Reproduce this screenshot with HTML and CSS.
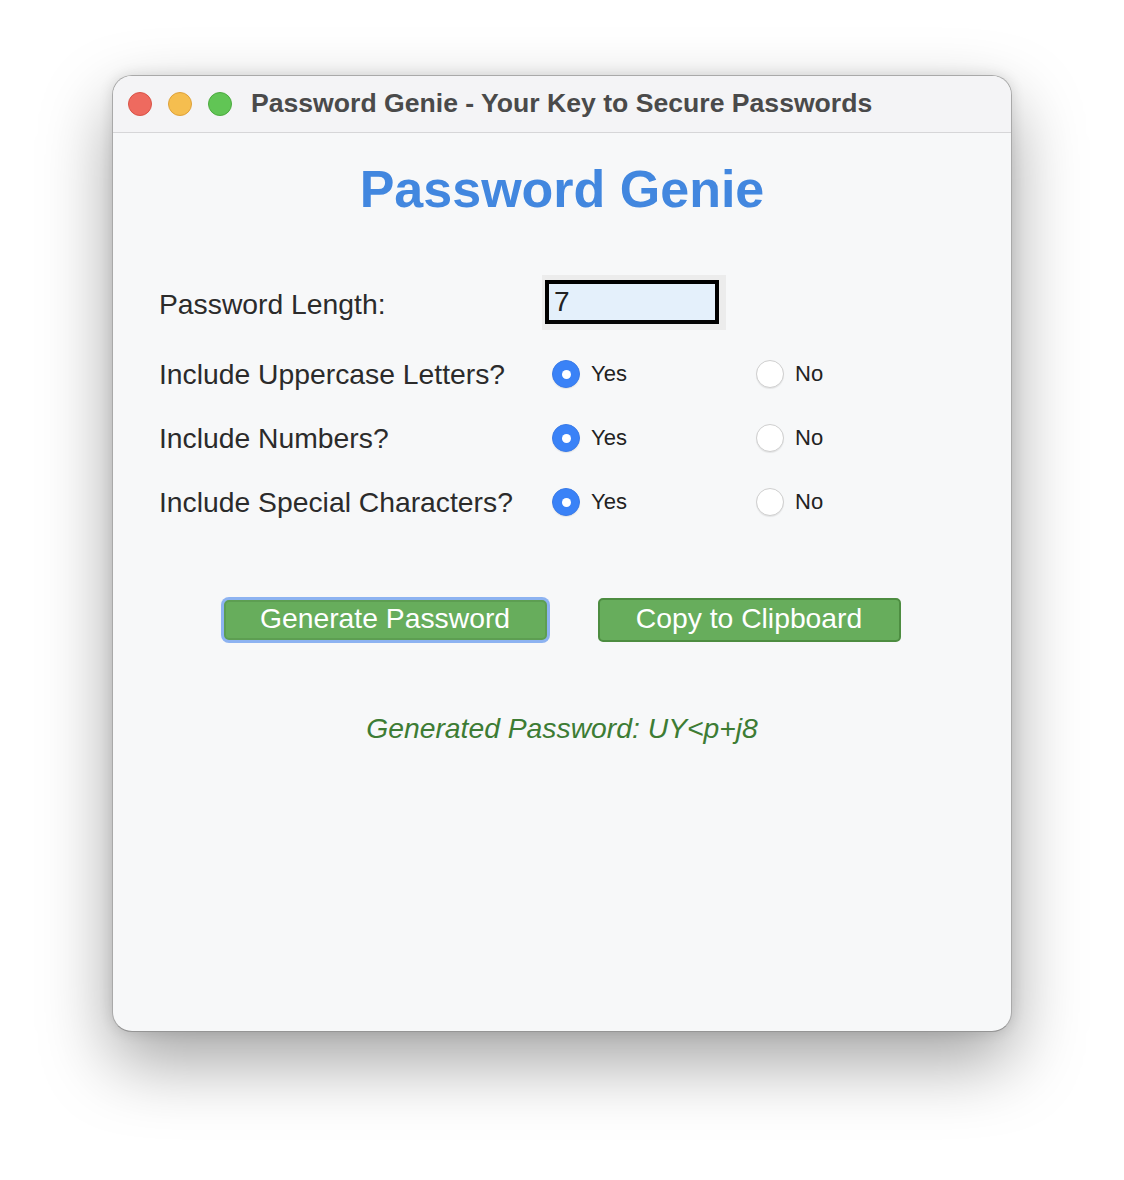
FILE: index.html
```html
<!DOCTYPE html>
<html>
<head>
<meta charset="utf-8">
<link rel="stylesheet" href="styles.css">
</head>
<body>
<div class="window">
  <div class="titlebar">
    <div class="lights">
      <span class="light red"></span>
      <span class="light yellow"></span>
      <span class="light green"></span>
    </div>
    <div class="title">Password Genie - Your Key to Secure Passwords</div>
  </div>
  <div class="content">
    <h1 class="heading">Password Genie</h1>
    <div class="form">
      <div class="label row-first">Password Length:</div>
      <div class="cell row-first">
        <div class="input-wrap"><div class="input">7</div></div>
      </div>
      <div class="cell row-first"></div>

      <div class="label">Include Uppercase Letters?</div>
      <div class="cell"><span class="radio on"></span><span class="opt">Yes</span></div>
      <div class="cell"><span class="radio"></span><span class="opt">No</span></div>

      <div class="label">Include Numbers?</div>
      <div class="cell"><span class="radio on"></span><span class="opt">Yes</span></div>
      <div class="cell"><span class="radio"></span><span class="opt">No</span></div>

      <div class="label">Include Special Characters?</div>
      <div class="cell"><span class="radio on"></span><span class="opt">Yes</span></div>
      <div class="cell"><span class="radio"></span><span class="opt">No</span></div>
    </div>
    <div class="buttons">
      <button class="btn btn-gen">Generate Password</button>
      <button class="btn btn-copy">Copy to Clipboard</button>
    </div>
    <div class="result">Generated Password: UY&lt;p+j8</div>
  </div>
</div>
</body>
</html>
```
FILE: styles.css
```css
html, body {
  margin: 0;
  padding: 0;
  background: #ffffff;
}
body {
  font-family: "Liberation Sans", Arial, sans-serif;
  padding-top: 75px;
  min-height: 1180px;
  box-sizing: border-box;
}
.window {
  width: 898px;
  height: 955px;
  margin: 0 auto;
  background: #f7f8f9;
  border: 1px solid #a9a9a9;
  border-bottom-color: #959595;
  border-radius: 20px;
  overflow: hidden;
  box-shadow: 0 30px 70px rgba(0, 0, 0, 0.36), 0 0 14px rgba(0, 0, 0, 0.12);
}
.titlebar {
  height: 56px;
  background: #f4f4f6;
  border-bottom: 1px solid #d6d6d8;
  display: flex;
  align-items: center;
  padding-left: 15px;
}
.lights {
  display: flex;
  gap: 16px;
}
.light {
  width: 22px;
  height: 22px;
  border-radius: 50%;
  display: block;
}
.red { background: #ee6a5f; border: 1px solid #d95347; }
.yellow { background: #f5be4f; border: 1px solid #dea13a; }
.green { background: #61c555; border: 1px solid #4caa3f; }
.title {
  margin-left: 19px;
  margin-top: -2px;
  font-weight: bold;
  font-size: 26.6px;
  color: #4a4a4a;
}
.content {
  display: flex;
  flex-direction: column;
  align-items: center;
}
.heading {
  margin: 26px 0 0 0;
  font-size: 52px;
  line-height: 60px;
  font-weight: bold;
  color: #4287df;
}
.form {
  align-self: flex-start;
  margin: 55px 0 0 46px;
  display: grid;
  grid-template-columns: 383px 204px 150px;
  grid-auto-rows: 40px;
  grid-template-rows: 56px;
  row-gap: 24px;
}
.label {
  font-size: 28.3px;
  color: #2b2b2b;
  display: flex;
  align-items: center;
}
.row-first.label { padding-top: 4px; }
.cell {
  display: flex;
  align-items: center;
}
.input-wrap {
  width: 184px;
  height: 55px;
  background: #ececec;
  display: flex;
  align-items: center;
  justify-content: center;
}
.input {
  width: 161px;
  height: 36px;
  border: 4px solid #000;
  background: #e4f0fb;
  font-size: 28px;
  line-height: 36px;
  color: #222;
  padding-left: 5px;
  box-sizing: content-box;
  margin-left: -4px;
}
.radio {
  width: 28px;
  height: 28px;
  border-radius: 50%;
  margin-left: 10px;
  box-sizing: border-box;
  border: 1px solid #cfcfcf;
  background: #ffffff;
  box-shadow: 0 1px 1px rgba(0, 0, 0, 0.08);
  position: relative;
  display: block;
}
.radio.on {
  background: #3a82f7;
  border-color: #3a7be8;
}
.radio.on::after {
  content: "";
  position: absolute;
  left: 8.5px;
  top: 8.5px;
  width: 9px;
  height: 9px;
  border-radius: 50%;
  background: #fff;
}
.opt {
  margin-left: 11px;
  font-size: 22px;
  color: #222;
}
.buttons {
  margin-top: 76px;
  display: flex;
  align-items: center;
  gap: 51px;
}
.btn {
  font-family: "Liberation Sans", Arial, sans-serif;
  font-size: 28.3px;
  color: #ffffff;
  background: #67ad5c;
  border: 2px solid #4d8d41;
  border-radius: 5px;
  padding: 0 0 3px 0;
  box-sizing: border-box;
}
.btn-gen {
  width: 323px;
  height: 40px;
  border-color: #5d9e52;
  box-shadow: 0 0 0 3px #8db3f1;
}
.btn-copy {
  width: 303px;
  height: 44px;
}
.result {
  margin-top: 70px;
  font-size: 28.3px;
  font-style: italic;
  color: #3d7c34;
}
```
